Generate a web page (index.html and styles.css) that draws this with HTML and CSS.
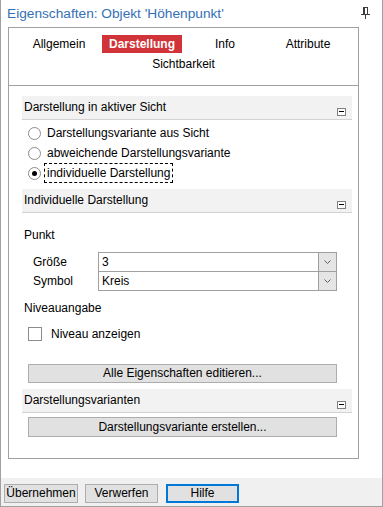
FILE: index.html
```html
<!DOCTYPE html>
<html lang="de">
<head>
<meta charset="utf-8">
<title>Eigenschaften</title>
<link rel="stylesheet" href="styles.css">
</head>
<body>
<div class="window">
  <div class="titlebar">
    <span class="title">Eigenschaften: Objekt 'Höhenpunkt'</span>
    <svg class="pin" width="9" height="12" viewBox="0 0 9 12">
      <path d="M2 0.5h5M6.5 0.5v7M0 7.5h9M4.5 7.5v4.5" stroke="#3c3c3c" fill="none" stroke-width="1"/>
      <rect x="2" y="0" width="2" height="8" fill="#3c3c3c"/>
    </svg>
  </div>
  <div class="panel">
    <div class="tabs">
      <div class="tab">Allgemein</div>
      <div class="tab"><span class="active">Darstellung</span></div>
      <div class="tab">Info</div>
      <div class="tab">Attribute</div>
      <div class="tab">Sichtbarkeit</div>
    </div>
    <div class="content">
      <div class="sec-head"><span>Darstellung in aktiver Sicht</span><span class="collapse"></span></div>
      <div class="radios">
        <div class="radio-row"><span class="radio"></span><span class="rlabel">Darstellungsvariante aus Sicht</span></div>
        <div class="radio-row"><span class="radio"></span><span class="rlabel">abweichende Darstellungsvariante</span></div>
        <div class="radio-row"><span class="radio checked"></span><span class="rlabel focus">individuelle Darstellung</span></div>
      </div>
      <div class="sec-head sec2"><span>Individuelle Darstellung</span><span class="collapse"></span></div>
      <div class="group-label punkt">Punkt</div>
      <div class="combo-rows">
        <div class="combo-row">
          <span class="clabel">Größe</span>
          <div class="combo"><span class="cval">3</span><span class="cbtn"><svg width="7" height="4" viewBox="0 0 7 4"><path d="M0.5 0.5L3.5 3.5L6.5 0.5" stroke="#606060" fill="none"/></svg></span></div>
        </div>
        <div class="combo-row second">
          <span class="clabel">Symbol</span>
          <div class="combo"><span class="cval">Kreis</span><span class="cbtn"><svg width="7" height="4" viewBox="0 0 7 4"><path d="M0.5 0.5L3.5 3.5L6.5 0.5" stroke="#606060" fill="none"/></svg></span></div>
        </div>
      </div>
      <div class="group-label niveau">Niveauangabe</div>
      <div class="check-row"><span class="checkbox"></span><span>Niveau anzeigen</span></div>
      <div class="btn wide btn1">Alle Eigenschaften editieren...</div>
      <div class="sec-head sec3"><span>Darstellungsvarianten</span><span class="collapse"></span></div>
      <div class="btn wide btn2">Darstellungsvariante erstellen...</div>
    </div>
  </div>
  <div class="footer">
    <div class="btn fbtn">Übernehmen</div>
    <div class="btn fbtn verwerfen">Verwerfen</div>
    <div class="btn fbtn hilfe">Hilfe</div>
  </div>
</div>
</body>
</html>
```

FILE: styles.css
```css
* { box-sizing: border-box; }
html, body { margin: 0; padding: 0; background: #fff; }
body {
  font-family: "Liberation Sans", Arial, sans-serif;
  font-size: 12px;
  color: #000;
}
.window {
  width: 383px;
  height: 507px;
  border-left: 1px solid #a0a0a0;
  border-right: 1px solid #a0a0a0;
  border-bottom: 1px solid #a0a0a0;
  display: flex;
  flex-direction: column;
}
.titlebar {
  height: 27px;
  display: flex;
  align-items: flex-start;
  justify-content: space-between;
  padding: 0 12px 0 6px;
}
.title {
  font-size: 13.7px;
  line-height: 27px;
  color: #3570b5;
}
.pin { margin-top: 7px; }
.panel {
  margin-left: 7px;
  width: 351px;
  height: 432px;
  border: 1px solid #a0a0a0;
}
.tabs {
  height: 58px;
  border-bottom: 1px solid #a0a0a0;
  padding-top: 6px;
  display: flex;
  flex-wrap: wrap;
  justify-content: center;
  align-content: flex-start;
}
.tab {
  width: 83px;
  height: 20px;
  line-height: 20px;
  text-align: center;
}
.tab .active {
  display: inline-block;
  background: #d13438;
  color: #fff;
  font-weight: bold;
  padding: 0 7px;
  height: 18px;
  line-height: 18px;
  margin-top: 1px;
}
.content {
  padding: 10px 6px 0 13px;
}
.sec-head {
  height: 24px;
  background: #f2f2f2;
  border-bottom: 1px solid #d3d3d3;
  display: flex;
  justify-content: space-between;
  align-items: flex-end;
  padding-left: 2px;
  line-height: 23px;
}
.sec-head > span:first-child { align-self: flex-start; }
.collapse {
  width: 9px;
  height: 8px;
  border: 1px solid #808080;
  margin: 0 6px 3px 0;
  position: relative;
  background: #fff;
}
.collapse::after {
  content: "";
  position: absolute;
  left: 1px;
  right: 1px;
  top: 2px;
  height: 1px;
  background: #000;
}
.radios { margin-top: 3px; }
.radio-row {
  height: 20px;
  display: flex;
  align-items: center;
  padding-left: 6px;
}
.radio {
  width: 13px;
  height: 13px;
  border: 1px solid #8c8c8c;
  border-radius: 50%;
  background: #fff;
  margin-right: 3px;
  display: flex;
  align-items: center;
  justify-content: center;
}
.radio.checked::after {
  content: "";
  width: 5px;
  height: 5px;
  border-radius: 50%;
  background: #000;
}
.rlabel {
  height: 20px;
  line-height: 18px;
  padding: 0 2px;
  border: 1px solid transparent;
}
.rlabel.focus { border: 1px dashed #000; }
.sec2 { margin-top: 6px; }
.group-label { height: 18px; line-height: 18px; padding-left: 2px; }
.punkt { margin-top: 13px; }
.combo-rows { margin-top: 8px; }
.combo-row {
  display: flex;
  align-items: center;
  height: 20px;
}
.combo-row.second { margin-top: -1px; }
.clabel { flex: 0 0 76px; padding-left: 11px; }
.combo {
  flex: 0 0 239px;
  height: 20px;
  border: 1px solid #a0a0a0;
  display: flex;
  background: #fff;
}
.cval { flex: 1; line-height: 18px; padding-left: 3px; }
.cbtn {
  width: 18px;
  border-left: 1px solid #a0a0a0;
  background: #e5e5e5;
  display: flex;
  align-items: center;
  justify-content: center;
}
.niveau { margin-top: 8px; }
.check-row {
  margin-top: 7px;
  height: 20px;
  display: flex;
  align-items: center;
  padding-left: 6px;
}
.checkbox {
  width: 14px;
  height: 14px;
  border: 1px solid #8c8c8c;
  background: #fff;
  margin-right: 9px;
}
.btn {
  background: #e1e1e1;
  border: 1px solid #adadad;
  text-align: center;
}
.wide {
  margin-left: 6px;
  width: 309px;
  height: 19px;
  line-height: 17px;
}
.btn1 { margin-top: 20px; }
.sec3 { margin-top: 6px; }
.btn2 { margin-top: 4px; height: 20px; line-height: 18px; }
.footer {
  margin-top: 19px;
  flex: 1;
  background: #f0f0f0;
  display: flex;
  padding: 6px 0 0 3px;
  align-items: flex-start;
}
.fbtn {
  width: 73px;
  height: 19px;
  line-height: 17px;
}
.fbtn:first-child { width: 74px; }
.verwerfen { margin-left: 7px; }
.hilfe {
  margin-left: 8px;
  border: 2px solid #0078d7;
  line-height: 15px;
}
```
